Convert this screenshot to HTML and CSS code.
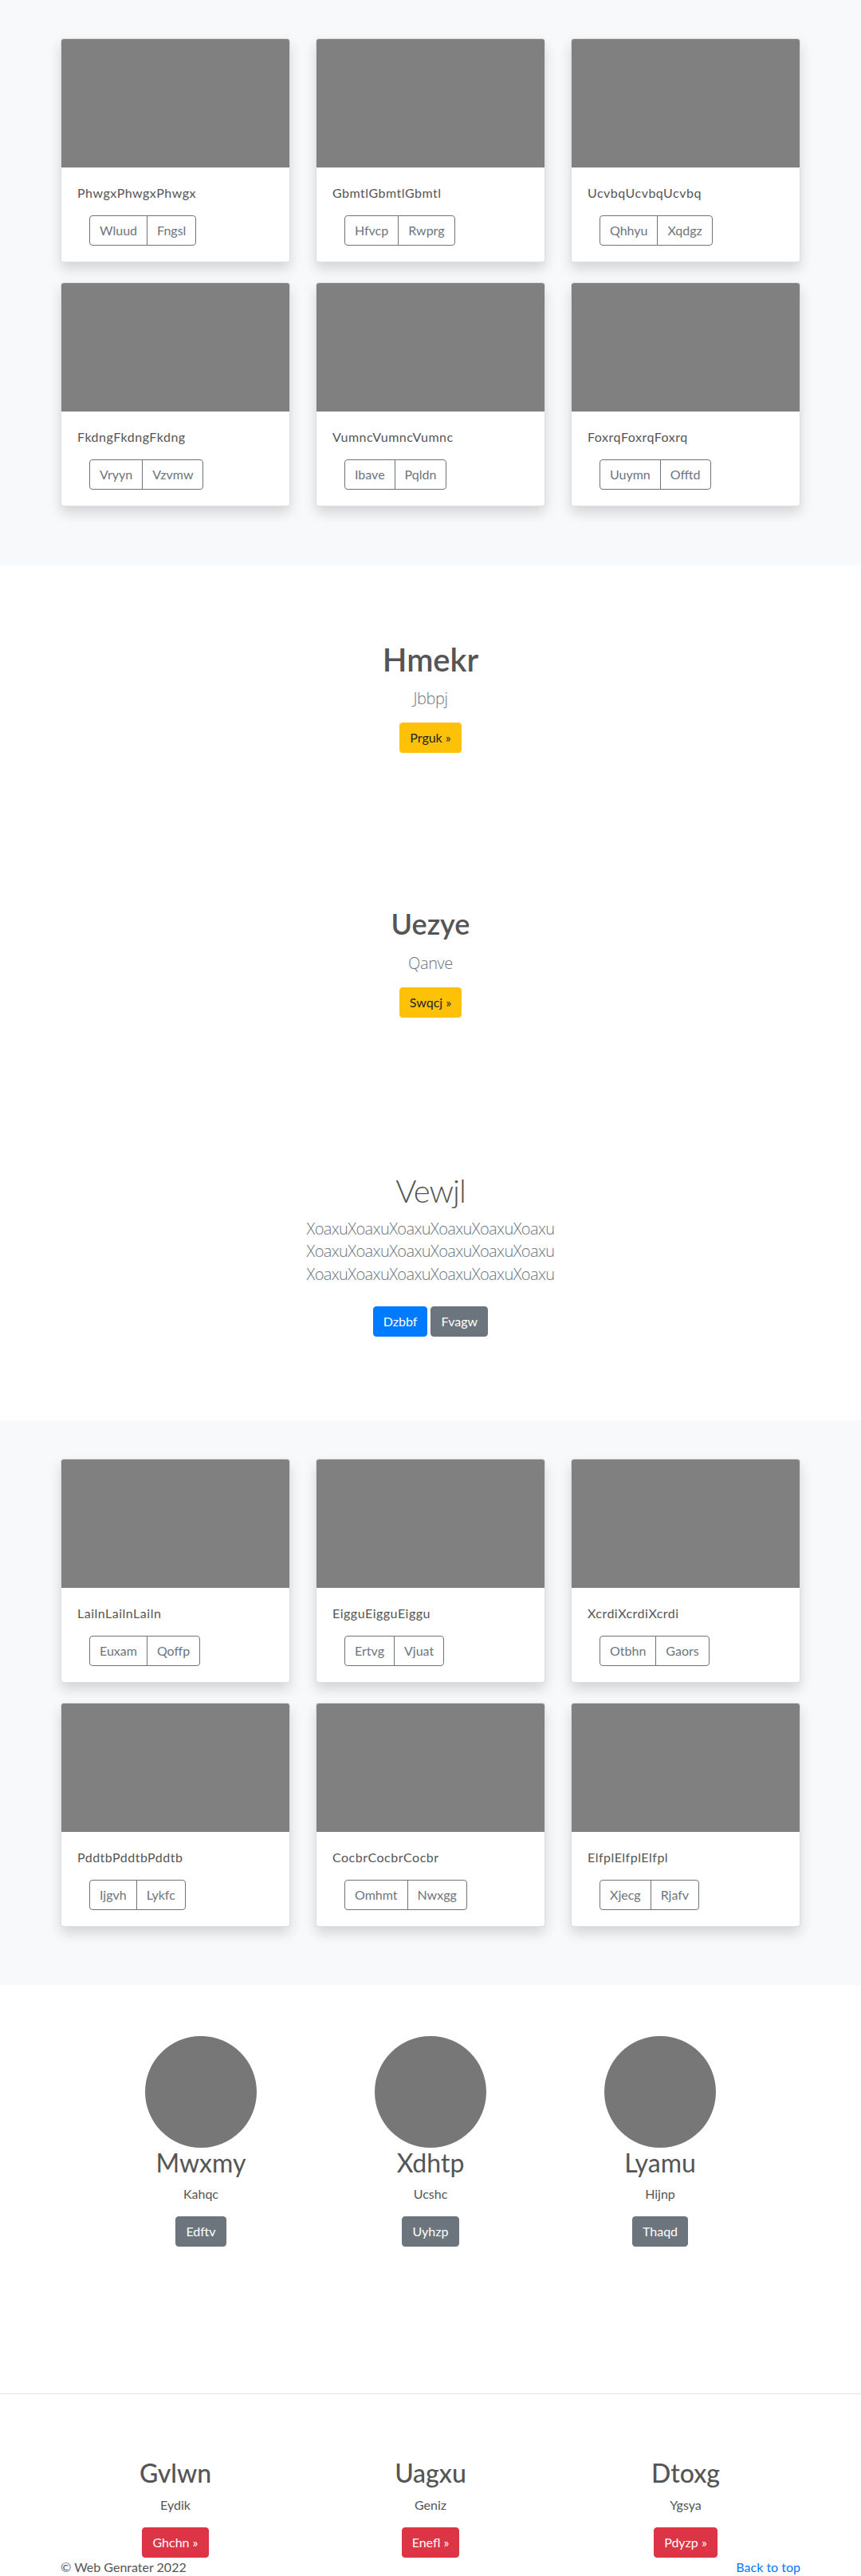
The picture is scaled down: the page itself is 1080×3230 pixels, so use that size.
FILE: index.html
```html
<!DOCTYPE html>
<html lang="en">
<head>
<meta charset="utf-8">
<title>Web Genrater</title>
<link rel="stylesheet" href="styles.css">
</head>
<body>
<section class="album">
  <div class="album-grid">
    <div class="card"><div class="card-img"></div><div class="card-body"><p class="card-text">PhwgxPhwgxPhwgx</p><div class="btn-group"><a class="btn-o">Wluud</a><a class="btn-o">Fngsl</a></div></div></div>
    <div class="card"><div class="card-img"></div><div class="card-body"><p class="card-text">GbmtlGbmtlGbmtl</p><div class="btn-group"><a class="btn-o">Hfvcp</a><a class="btn-o">Rwprg</a></div></div></div>
    <div class="card"><div class="card-img"></div><div class="card-body"><p class="card-text">UcvbqUcvbqUcvbq</p><div class="btn-group"><a class="btn-o">Qhhyu</a><a class="btn-o">Xqdgz</a></div></div></div>
    <div class="card"><div class="card-img"></div><div class="card-body"><p class="card-text">FkdngFkdngFkdng</p><div class="btn-group"><a class="btn-o">Vryyn</a><a class="btn-o">Vzvmw</a></div></div></div>
    <div class="card"><div class="card-img"></div><div class="card-body"><p class="card-text">VumncVumncVumnc</p><div class="btn-group"><a class="btn-o">Ibave</a><a class="btn-o">Pqldn</a></div></div></div>
    <div class="card"><div class="card-img"></div><div class="card-body"><p class="card-text">FoxrqFoxrqFoxrq</p><div class="btn-group"><a class="btn-o">Uuymn</a><a class="btn-o">Offtd</a></div></div></div>
  </div>
</section>

<section class="hero hero-one">
  <h1 class="hero-title">Hmekr</h1>
  <p class="lead">Jbbpj</p>
  <p class="actions"><a class="btn btn-warning">Prguk »</a></p>
</section>

<section class="hero hero-two">
  <h1 class="hero-title">Uezye</h1>
  <p class="lead">Qanve</p>
  <p class="actions"><a class="btn btn-warning">Swqcj »</a></p>
</section>

<section class="hero hero-three">
  <h1 class="hero-title">Vewjl</h1>
  <p class="lead">XoaxuXoaxuXoaxuXoaxuXoaxuXoaxu XoaxuXoaxuXoaxuXoaxuXoaxuXoaxu XoaxuXoaxuXoaxuXoaxuXoaxuXoaxu</p>
  <p class="actions"><a class="btn btn-primary">Dzbbf</a><a class="btn btn-secondary">Fvagw</a></p>
</section>

<section class="album">
  <div class="album-grid">
    <div class="card"><div class="card-img"></div><div class="card-body"><p class="card-text">LailnLailnLailn</p><div class="btn-group"><a class="btn-o">Euxam</a><a class="btn-o">Qoffp</a></div></div></div>
    <div class="card"><div class="card-img"></div><div class="card-body"><p class="card-text">EigguEigguEiggu</p><div class="btn-group"><a class="btn-o">Ertvg</a><a class="btn-o">Vjuat</a></div></div></div>
    <div class="card"><div class="card-img"></div><div class="card-body"><p class="card-text">XcrdiXcrdiXcrdi</p><div class="btn-group"><a class="btn-o">Otbhn</a><a class="btn-o">Gaors</a></div></div></div>
    <div class="card"><div class="card-img"></div><div class="card-body"><p class="card-text">PddtbPddtbPddtb</p><div class="btn-group"><a class="btn-o">Ijgvh</a><a class="btn-o">Lykfc</a></div></div></div>
    <div class="card"><div class="card-img"></div><div class="card-body"><p class="card-text">CocbrCocbrCocbr</p><div class="btn-group"><a class="btn-o">Omhmt</a><a class="btn-o">Nwxgg</a></div></div></div>
    <div class="card"><div class="card-img"></div><div class="card-body"><p class="card-text">ElfplElfplElfpl</p><div class="btn-group"><a class="btn-o">Xjecg</a><a class="btn-o">Rjafv</a></div></div></div>
  </div>
</section>

<section class="people">
  <div class="people-grid">
    <div class="person"><div class="avatar"></div><h2 class="person-name">Mwxmy</h2><p class="person-text">Kahqc</p><p class="actions"><a class="btn btn-secondary">Edftv</a></p></div>
    <div class="person"><div class="avatar"></div><h2 class="person-name">Xdhtp</h2><p class="person-text">Ucshc</p><p class="actions"><a class="btn btn-secondary">Uyhzp</a></p></div>
    <div class="person"><div class="avatar"></div><h2 class="person-name">Lyamu</h2><p class="person-text">Hijnp</p><p class="actions"><a class="btn btn-secondary">Thaqd</a></p></div>
  </div>
</section>

<hr class="divider">

<section class="features">
  <div class="features-grid">
    <div class="feature"><h2 class="feature-title">Gvlwn</h2><p class="feature-text">Eydik</p><p class="feature-action"><a class="btn btn-danger">Ghchn »</a></p></div>
    <div class="feature"><h2 class="feature-title">Uagxu</h2><p class="feature-text">Geniz</p><p class="feature-action"><a class="btn btn-danger">Enefl »</a></p></div>
    <div class="feature"><h2 class="feature-title">Dtoxg</h2><p class="feature-text">Ygsya</p><p class="feature-action"><a class="btn btn-danger">Pdyzp »</a></p></div>
  </div>
</section>

<footer class="footer">
  <p class="copy">© Web Genrater 2022</p>
  <a class="back" href="#">Back to top</a>
</footer>
</body>
</html>
```

FILE: styles.css
```css
* { box-sizing: border-box; }

body {
  margin: 0;
  font-family: "Lato", "Open Sans", "Liberation Sans", sans-serif;
  font-size: 16px;
  line-height: 1.5;
  color: #555;
  background: #fff;
}

a { text-decoration: none; }

/* ---------- album ---------- */
.album {
  background: #f8f9fa;
  padding: 48px 0 48px;
}

.album-grid {
  width: 928px;
  margin: 0 auto;
  display: grid;
  grid-template-columns: repeat(3, 288px);
  column-gap: 32px;
  row-gap: 25px;
  padding-bottom: 25px;
}

.card {
  background: #fff;
  border: 1px solid rgba(0, 0, 0, 0.125);
  border-radius: 4px;
  box-shadow: 0 8px 16px rgba(0, 0, 0, 0.15);
  overflow: hidden;
}

.card-img {
  height: 161px;
  background: #808080;
}

.card-body {
  padding: 20px;
}

.card-text {
  margin: 0 0 16px;
  letter-spacing: 0.5px;
  color: #555;
}

.btn-group {
  display: inline-flex;
  margin-left: 15px;
}

.btn-o {
  display: inline-block;
  padding: 6px 12px;
  font-size: 16px;
  line-height: 24px;
  color: #6c757d;
  border: 1px solid #6c757d;
}

.btn-o:first-child {
  border-radius: 4px 0 0 4px;
}

.btn-o + .btn-o {
  margin-left: -1px;
  border-radius: 0 4px 4px 0;
}

/* ---------- buttons ---------- */
.btn {
  display: inline-block;
  padding: 6px 12px;
  font-size: 16px;
  line-height: 24px;
  border: 1px solid transparent;
  border-radius: 4px;
  color: #fff;
}

.btn-warning { background: #ffc107; border-color: #ffc107; color: #212529; }
.btn-primary { background: #007bff; border-color: #007bff; }
.btn-secondary { background: #6c757d; border-color: #6c757d; }
.btn-danger { background: #dc3545; border-color: #dc3545; }

/* ---------- hero ---------- */
.hero {
  text-align: center;
  padding: 95px 0 82px;
}

.hero-title {
  margin: 0 0 10px;
  font-size: 40px;
  font-weight: 600;
  line-height: 1.2;
  color: #555;
}

.lead {
  margin: 0 0 15px;
  font-family: "Open Sans", "Lato", sans-serif;
  font-size: 20px;
  font-weight: 300;
  line-height: 30px;
  letter-spacing: -0.4px;
  color: #6c757d;
}

.actions {
  margin: 0 0 16px;
}

.hero-two .hero-title {
  font-size: 36px;
  margin-bottom: 13px;
}

.hero-three {
  padding-bottom: 89px;
}

.hero-three .hero-title {
  font-weight: 300;
  letter-spacing: -1px;
}

.hero-three .lead {
  max-width: 450px;
  margin: 0 auto 26px;
  line-height: 28.3px;
  letter-spacing: -0.6px;
}

.hero-three .actions {
  display: flex;
  justify-content: center;
  gap: 4px;
}

/* ---------- people ---------- */
.people {
  padding: 64px 0 168px;
}

.people-grid {
  width: 864px;
  margin: 0 auto;
  display: grid;
  grid-template-columns: repeat(3, 288px);
  text-align: center;
}

.avatar {
  width: 140px;
  height: 140px;
  margin: 0 auto;
  border-radius: 50%;
  background: #777;
}

.person-name {
  margin: 0 0 8px;
  font-size: 32px;
  font-weight: 400;
  line-height: 1.2;
  color: #555;
}

.person-text {
  margin: 0 0 16px;
  color: #555;
}

/* ---------- divider ---------- */
.divider {
  margin: 0;
  border: 0;
  border-top: 1px solid rgba(0, 0, 0, 0.1);
}

/* ---------- features ---------- */
.features {
  padding-top: 80px;
}

.features-grid {
  width: 960px;
  margin: 0 auto;
  display: grid;
  grid-template-columns: repeat(3, 320px);
  text-align: center;
}

.feature-title {
  margin: 0 0 8px;
  font-size: 32px;
  font-weight: 500;
  line-height: 1.2;
  color: #555;
}

.feature-text {
  margin: 0 0 16px;
  color: #555;
}

.feature-action {
  margin: 0;
}

/* ---------- footer ---------- */
.footer {
  width: 928px;
  margin: 0 auto;
  display: flex;
  justify-content: space-between;
  padding-bottom: 24px;
}

.copy {
  margin: 0;
  color: #555;
}

.back {
  color: #007bff;
}
```
